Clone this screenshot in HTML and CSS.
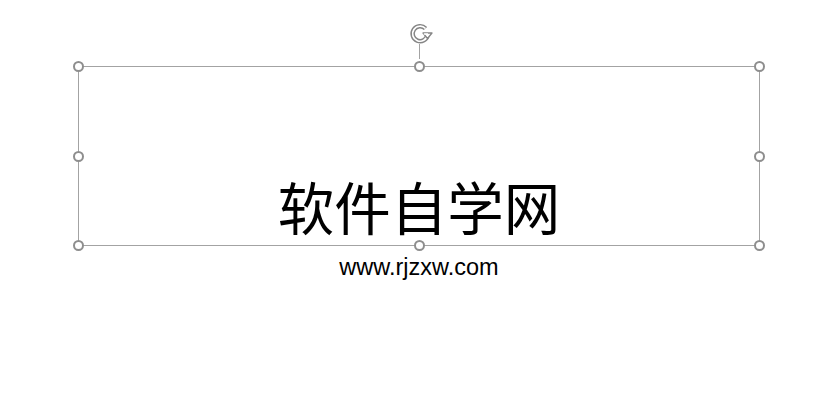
FILE: index.html
```html
<!DOCTYPE html>
<html lang="zh">
<head>
<meta charset="utf-8">
<title>软件自学网</title>
<link rel="stylesheet" href="styles.css">
</head>
<body>
<div class="page">
  <div class="box">
    <div class="rotate">
      <svg width="26" height="26" viewBox="0 0 26 26">
        <path d="M18.5 7.5 A7.5 7.5 0 1 0 20.5 14" fill="none" stroke="#858585" stroke-width="4.6"/>
        <path d="M18.5 7.5 A7.5 7.5 0 1 0 20.5 14" fill="none" stroke="#fff" stroke-width="1.7"/>
        <path d="M16 12 L25 12 L20.5 17.5 Z" fill="#fff" stroke="#858585" stroke-width="1.3" stroke-linejoin="round"/>
        <path d="M16.8 13 L21 13" stroke="#fff" stroke-width="1.5"/>
      </svg>
      <span class="stem"></span>
    </div>
    <span class="h tl"></span><span class="h tc"></span><span class="h tr"></span>
    <span class="h ml"></span><span class="h mr"></span>
    <span class="h bl"></span><span class="h bc"></span><span class="h br"></span>
    <div class="title">软件自学网</div>
  </div>
  <div class="url">www.rjzxw.com</div>
</div>
</body>
</html>
```
FILE: styles.css
```css
html, body { margin: 0; padding: 0; background: #fff; }
.page {
  width: 823px;
  height: 401px;
  padding-top: 66px;
  box-sizing: border-box;
  display: flex;
  flex-direction: column;
  align-items: flex-start;
}
.box {
  position: relative;
  margin-left: 78px;
  width: 682px;
  height: 180px;
  border: 1px solid #a3a3a3;
  box-sizing: border-box;
  display: flex;
  flex-direction: column;
  justify-content: flex-end;
  align-items: center;
}
.title {
  font-family: "Noto Sans CJK SC", sans-serif;
  font-size: 56.5px;
  line-height: 56px;
  color: #000;
  margin-bottom: 12px;
}
.url {
  width: 838px;
  margin-top: 8px;
  text-align: center;
  font-family: "Liberation Sans", Arial, sans-serif;
  font-size: 23.5px;
  color: #000;
}
.h {
  position: absolute;
  width: 11px;
  height: 11px;
  border: 2px solid #8e8e8e;
  border-radius: 50%;
  background: #fff;
  box-sizing: border-box;
}
.tl { left: -6px; top: -6px; }
.tc { left: 335px; top: -6px; }
.tr { right: -6px; top: -6px; }
.ml { left: -6px; top: 83.5px; }
.mr { right: -6px; top: 83.5px; }
.bl { left: -6px; bottom: -6px; }
.bc { left: 335px; bottom: -6px; }
.br { right: -6px; bottom: -6px; }
.rotate {
  position: absolute;
  left: 327px;
  top: -46px;
  width: 26px;
  display: flex;
  flex-direction: column;
  align-items: center;
}
.rotate svg { display: block; margin-left: 2px; }
.stem {
  display: block;
  width: 1px;
  height: 15px;
  margin-top: -3px;
  background: #a3a3a3;
}
```
